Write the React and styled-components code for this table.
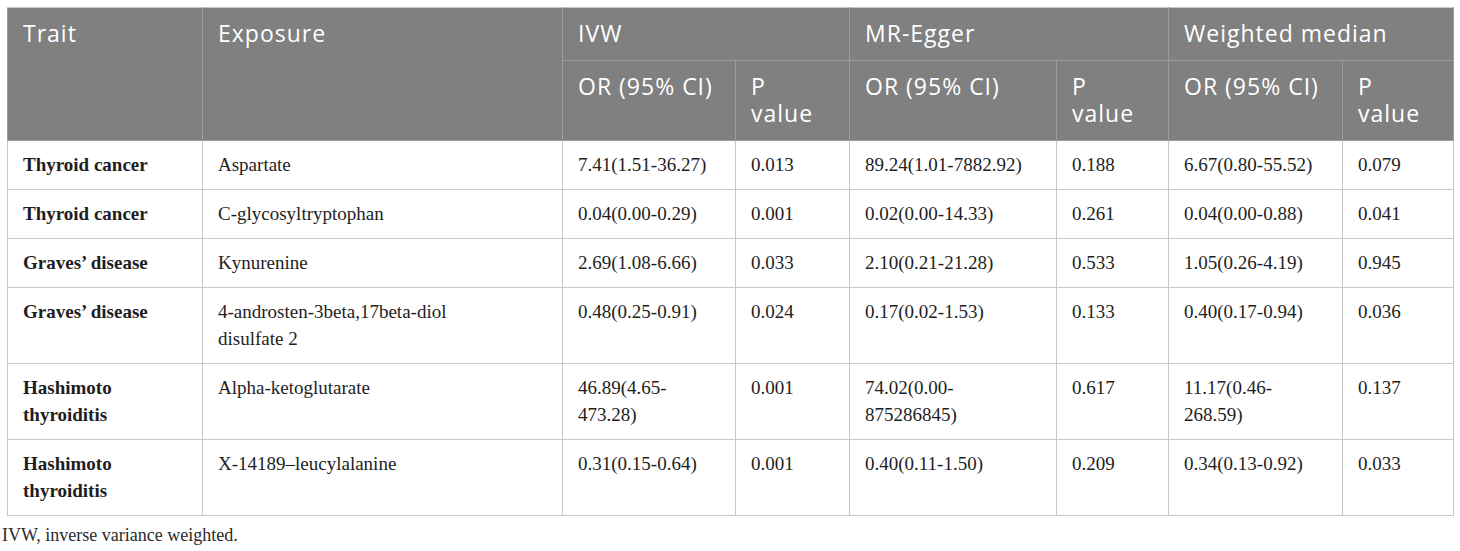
import React from "react"
import styled, { createGlobalStyle } from "styled-components"

const rows = [
  { trait: "Thyroid cancer", exposure: "Aspartate", ivw: "7.41(1.51-36.27)", ivwP: "0.013", egger: "89.24(1.01-7882.92)", eggerP: "0.188", wm: "6.67(0.80-55.52)", wmP: "0.079" },
  { trait: "Thyroid cancer", exposure: "C-glycosyltryptophan", ivw: "0.04(0.00-0.29)", ivwP: "0.001", egger: "0.02(0.00-14.33)", eggerP: "0.261", wm: "0.04(0.00-0.88)", wmP: "0.041" },
  { trait: "Graves’ disease", exposure: "Kynurenine", ivw: "2.69(1.08-6.66)", ivwP: "0.033", egger: "2.10(0.21-21.28)", eggerP: "0.533", wm: "1.05(0.26-4.19)", wmP: "0.945" },
  { trait: "Graves’ disease", exposure: "4-androsten-3beta,17beta-diol disulfate 2", ivw: "0.48(0.25-0.91)", ivwP: "0.024", egger: "0.17(0.02-1.53)", eggerP: "0.133", wm: "0.40(0.17-0.94)", wmP: "0.036" },
  { trait: "Hashimoto thyroiditis", exposure: "Alpha-ketoglutarate", ivw: "46.89(4.65-473.28)", ivwP: "0.001", egger: "74.02(0.00-875286845)", eggerP: "0.617", wm: "11.17(0.46-268.59)", wmP: "0.137" },
  { trait: "Hashimoto thyroiditis", exposure: "X-14189–leucylalanine", ivw: "0.31(0.15-0.64)", ivwP: "0.001", egger: "0.40(0.11-1.50)", eggerP: "0.209", wm: "0.34(0.13-0.92)", wmP: "0.033" },
]

const widths = [195, 360, 173, 114, 207, 112, 174, 111]

const App = () => (
  <Page>
    <GlobalStyle />
    <Table>
      <colgroup>
        {widths.map((w, i) => <col key={i} style={{ width: w }} />)}
      </colgroup>
      <thead>
        <tr>
          <HeadCell rowSpan={2}>Trait</HeadCell>
          <HeadCell rowSpan={2}>Exposure</HeadCell>
          <HeadCell colSpan={2}>IVW</HeadCell>
          <HeadCell colSpan={2}>MR-Egger</HeadCell>
          <HeadCell colSpan={2}>Weighted median</HeadCell>
        </tr>
        <tr>
          <HeadCell>OR (95% CI)</HeadCell>
          <HeadCell>P<br />value</HeadCell>
          <HeadCell>OR (95% CI)</HeadCell>
          <HeadCell>P<br />value</HeadCell>
          <HeadCell>OR (95% CI)</HeadCell>
          <HeadCell>P<br />value</HeadCell>
        </tr>
      </thead>
      <tbody>
        {rows.map((r, i) => (
          <tr key={i}>
            <Cell $bold>{r.trait}</Cell>
            <Cell $padRight={80}>{r.exposure}</Cell>
            <Cell>{r.ivw}</Cell>
            <Cell>{r.ivwP}</Cell>
            <Cell>{r.egger}</Cell>
            <Cell>{r.eggerP}</Cell>
            <Cell>{r.wm}</Cell>
            <Cell>{r.wmP}</Cell>
          </tr>
        ))}
      </tbody>
    </Table>
    <Footnote>IVW, inverse variance weighted.</Footnote>
  </Page>
)

const GlobalStyle = createGlobalStyle`
  body {
    margin: 0;
    background: #ffffff;
  }
`

const Page = styled.div`
  padding: 7px 7px 0 2px;
`

const Table = styled.table`
  margin-left: 5px;
  width: 1446px;
  table-layout: fixed;
  border-collapse: collapse;
  border: 1px solid #c8c8c8;
`

const HeadCell = styled.th`
  background: #808080;
  color: #ffffff;
  font-family: "Open Sans", sans-serif;
  font-weight: 400;
  font-size: 23px;
  letter-spacing: 1px;
  line-height: 27px;
  text-align: left;
  vertical-align: top;
  padding: 12px 15px 13px;
  border: 1px solid #9c9c9c;
  border-top-color: #c8c8c8;
`

const Cell = styled.td`
  font-family: "Liberation Serif", "Times New Roman", serif;
  font-size: 19px;
  font-weight: ${p => (p.$bold ? 700 : 400)};
  line-height: 27px;
  color: #1e1e1e;
  vertical-align: top;
  padding: 10px ${p => p.$padRight || 20}px 11px 15px;
  border: 1px solid #c8c8c8;
`

const Footnote = styled.p`
  margin: 6px 0 0;
  font-family: "Liberation Serif", "Times New Roman", serif;
  font-size: 18px;
  line-height: 27px;
  color: #2a2a2a;
`

export default App
